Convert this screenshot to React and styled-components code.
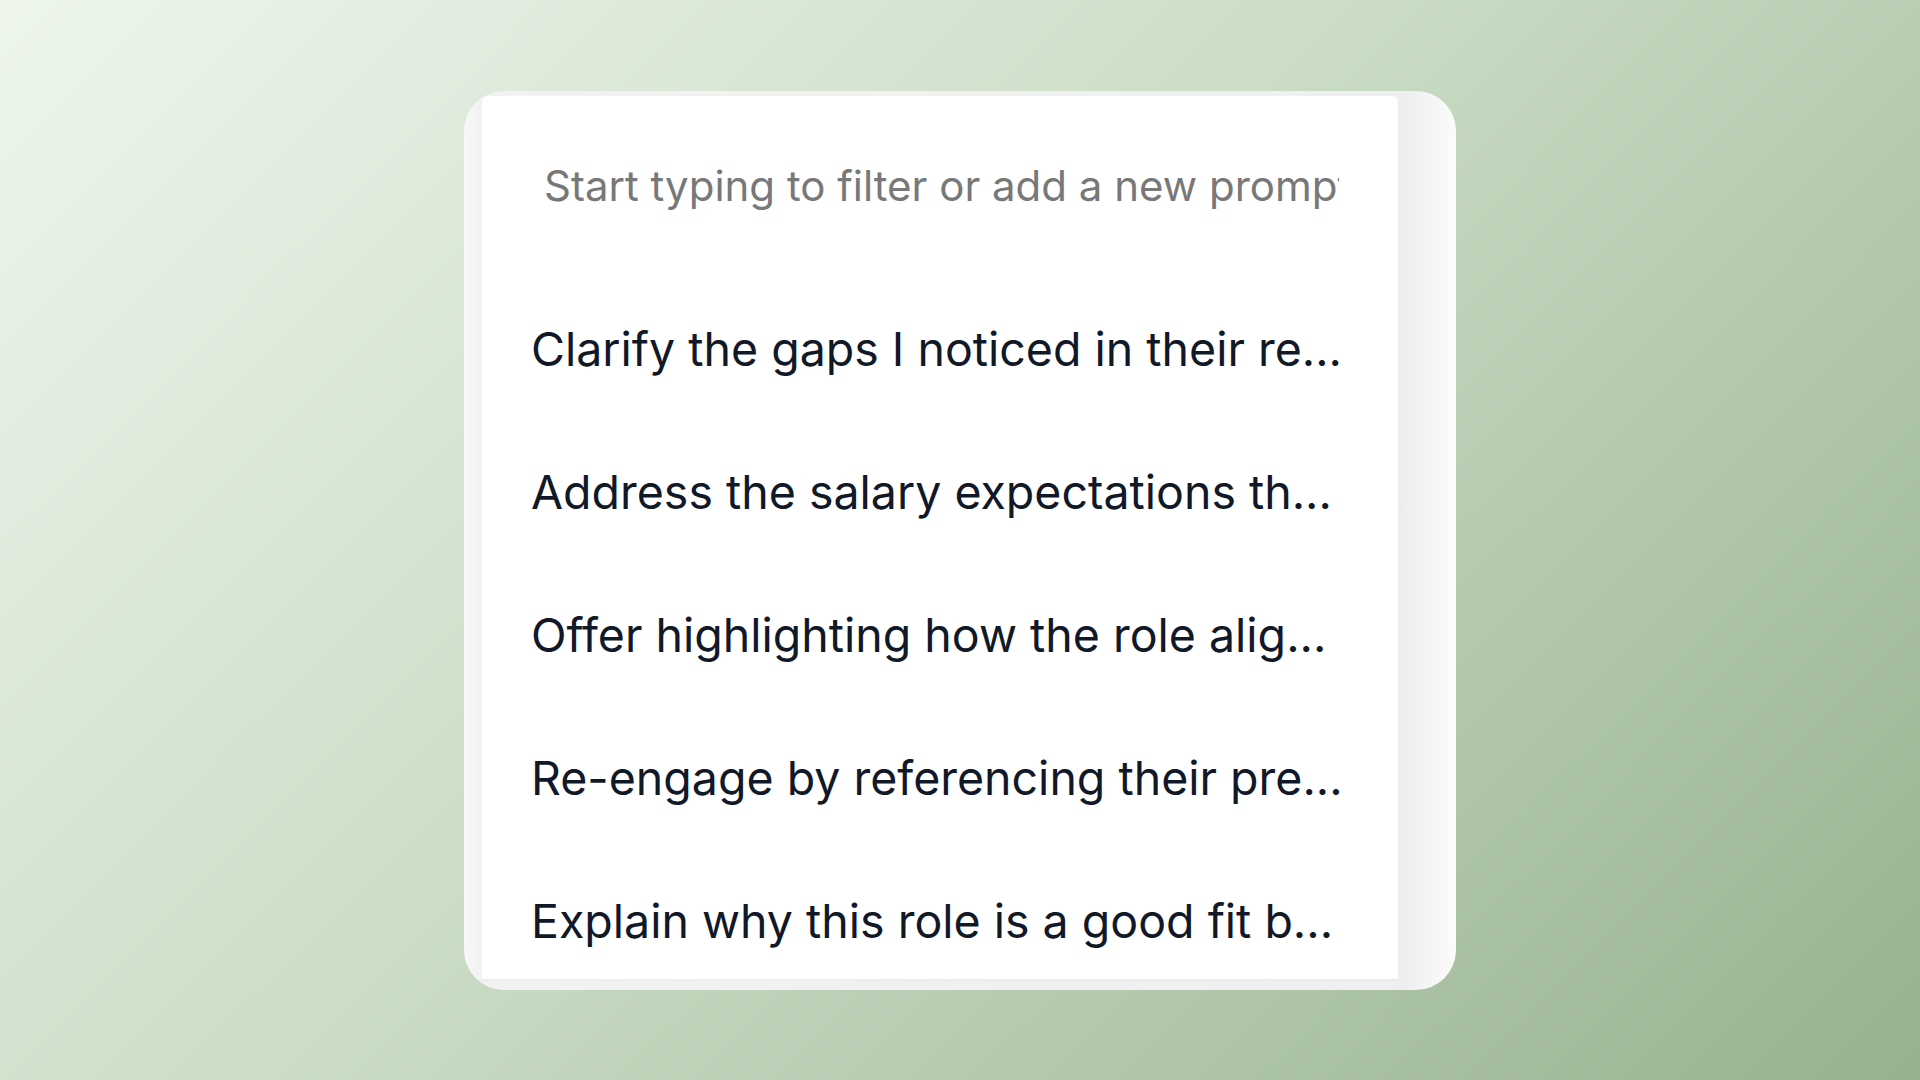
import styled, { createGlobalStyle } from "styled-components";

const GlobalStyle = createGlobalStyle`
    html, body {
        margin: 0;
        padding: 0;
    }
    body {
        font-family: Inter, "Noto Sans", sans-serif;
    }
`;

const prompts = [
    "Clarify the gaps I noticed in their re...",
    "Address the salary expectations th...",
    "Offer highlighting how the role alig...",
    "Re-engage by referencing their pre...",
    "Explain why this role is a good fit b...",
];

const Page = styled.div`
    width: 100vw;
    height: 100vh;
    display: flex;
    align-items: center;
    justify-content: center;
    background: linear-gradient(135deg, #eef6ec 0%, #cbddc6 45%, #97b290 100%);
`;

const Card = styled.div`
    width: 992px;
    height: 899px;
    box-sizing: border-box;
    padding: 5px 58px 9px 18px;
    border-radius: 40px;
    background: linear-gradient(90deg, #f8f8f8 0px, #f2f2f2 18px, #efefef 934px, #ededed 935px, #fcfcfc 992px);
    display: flex;
`;

const Panel = styled.div`
    flex: 1;
    background: #ffffff;
    border-bottom: 2px solid #ebebf3;
    border-top-left-radius: 6px;
    border-top-right-radius: 6px;
    overflow: hidden;
    display: flex;
    flex-direction: column;
`;

const SearchInput = styled.input`
    margin: 64px 59px 0 62px;
    height: 60px;
    padding: 0;
    border: none;
    outline: none;
    background: transparent;
    font-family: Inter, "Noto Sans", sans-serif;
    font-size: 42px;
    color: #111827;

    &::placeholder {
        color: #787878;
    }
`;

const List = styled.ul`
    list-style: none;
    margin: 67px 0 0 0;
    padding: 0;
`;

const Item = styled.li`
    height: 143px;
    display: flex;
    align-items: center;
    padding: 0 40px 0 49px;
    font-size: 46.5px;
    color: #111827;
    white-space: nowrap;
    overflow: hidden;
    text-overflow: ellipsis;
    cursor: pointer;
`;

export default function App() {
    return (
        <>
            <GlobalStyle />
            <Page>
                <Card>
                    <Panel>
                        <SearchInput placeholder="Start typing to filter or add a new prompt" />
                        <List>
                            {prompts.map((text, index) => {
                                return <Item key={index}>{text}</Item>
                            })}
                        </List>
                    </Panel>
                </Card>
            </Page>
        </>
    )
}
